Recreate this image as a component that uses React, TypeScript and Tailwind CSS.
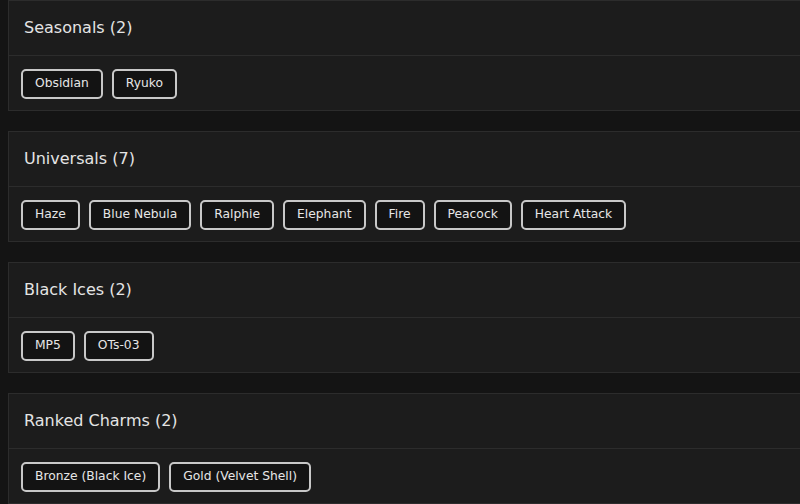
import React from "react";

const groups: { title: string; items: string[] }[] = [
  { title: "Seasonals", items: ["Obsidian", "Ryuko"] },
  { title: "Universals", items: ["Haze", "Blue Nebula", "Ralphie", "Elephant", "Fire", "Peacock", "Heart Attack"] },
  { title: "Black Ices", items: ["MP5", "OTs-03"] },
  { title: "Ranked Charms", items: ["Bronze (Black Ice)", "Gold (Velvet Shell)"] },
];

const Tag = ({ label }: { label: string }) => (
  <div className="h-[30px] px-[12px] flex items-center rounded-[5px] border-2 border-[#c8c8c8] bg-[#131313] text-[12.3px] text-[#e6e6e6] whitespace-nowrap">
    {label}
  </div>
);

export default function App() {
  return (
    <div className="min-h-[504px] w-[800px] overflow-hidden bg-[#141414] pl-[8px] font-['DejaVu_Sans',sans-serif]">
      <div className="flex flex-col gap-[20px] w-[820px]">
        {groups.map((g) => (
          <section key={g.title} className="border border-[#2c2c2c] bg-[#1c1c1c]">
            <div className="h-[55px] flex items-center px-[15px] border-b border-[#2c2c2c]">
              <h2 className="text-[16px] text-[#e4e4e4]">
                {g.title} ({g.items.length})
              </h2>
            </div>
            <div className="h-[54px] flex items-center gap-[9px] px-[12px] pt-[1px]">
              {g.items.map((i) => (
                <Tag key={i} label={i} />
              ))}
            </div>
          </section>
        ))}
      </div>
    </div>
  );
}
